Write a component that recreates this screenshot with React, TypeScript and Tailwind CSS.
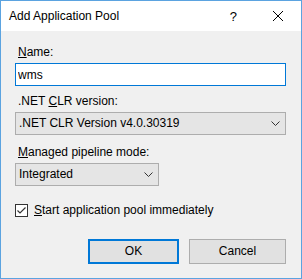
import { useState } from 'react';

const font = { fontFamily: '"Liberation Sans", Arial, sans-serif' };

function Chevron() {
  return (
    <svg width="9" height="5" viewBox="0 0 9 5" className="shrink-0">
      <path d="M0.5 0.5 L4.5 4.5 L8.5 0.5" fill="none" stroke="#333" strokeWidth="1" />
    </svg>
  );
}

function Select({ value, className }: { value: string; className: string }) {
  return (
    <div
      className={`flex h-[23px] items-center justify-between border border-[#adadad] bg-[#e5e5e5] pl-[3px] pr-[5px] text-[12px] leading-[15px] text-black ${className}`}
    >
      <span>{value}</span>
      <Chevron />
    </div>
  );
}

export default function App() {
  const [name, setName] = useState('wms');
  const [start, setStart] = useState(true);

  return (
    <div
      className="flex h-[279px] w-[302px] flex-col border border-[#5ba3e0] bg-[#f0f0f0] text-[12px] leading-[15px] text-black"
      style={font}
    >
      <div className="flex h-[30px] shrink-0 items-center bg-white pl-[8px]">
        <span className="flex-1">Add Application Pool</span>
        <span className="mr-[18px] text-[13px]">?</span>
        <div className="flex h-[30px] w-[46px] items-center justify-center">
          <svg width="10" height="10" viewBox="0 0 10 10">
            <path d="M0 0 L10 10 M10 0 L0 10" stroke="#000" strokeWidth="1" />
          </svg>
        </div>
      </div>

      <div className="flex flex-col pb-[14px] pl-[14px] pr-[15px] pt-[14px]">
        <label className="ml-[3px] h-[15px]">
          <span className="underline">N</span>ame:
        </label>
        <input
          value={name}
          onChange={(e) => setName(e.target.value)}
          className="mt-[3px] h-[23px] w-full border border-[#0078d7] bg-white pl-[2px] text-[12px] outline-none"
        />

        <label className="ml-[3px] mt-[8px] h-[15px]">
          .NET <span className="underline">C</span>LR version:
        </label>
        <Select value=".NET CLR Version v4.0.30319" className="mt-[3px] w-full" />

        <label className="ml-[3px] mt-[10px] h-[15px]">
          <span className="underline">M</span>anaged pipeline mode:
        </label>
        <Select value="Integrated" className="mt-[3px] w-[144px]" />

        <label className="mt-[17px] flex h-[15px] items-center" onClick={() => setStart(!start)}>
          <span className="flex h-[13px] w-[13px] items-center justify-center border border-[#333] bg-white">
            {start && (
              <svg width="11" height="11" viewBox="0 0 11 11">
                <path d="M1.5 5.5 L4 8 L9.5 2.5" fill="none" stroke="#333" strokeWidth="1.2" />
              </svg>
            )}
          </span>
          <span className="ml-[6px]">
            <span className="underline">S</span>tart application pool immediately
          </span>
        </label>

        <div className="mt-[21px] flex justify-end gap-[10px]">
          <button className="h-[25px] w-[91px] border-2 border-[#0078d7] bg-[#e1e1e1] text-[12px]">
            OK
          </button>
          <button className="h-[25px] w-[97px] border border-[#adadad] bg-[#e1e1e1] text-[12px]">
            Cancel
          </button>
        </div>
      </div>
    </div>
  );
}
